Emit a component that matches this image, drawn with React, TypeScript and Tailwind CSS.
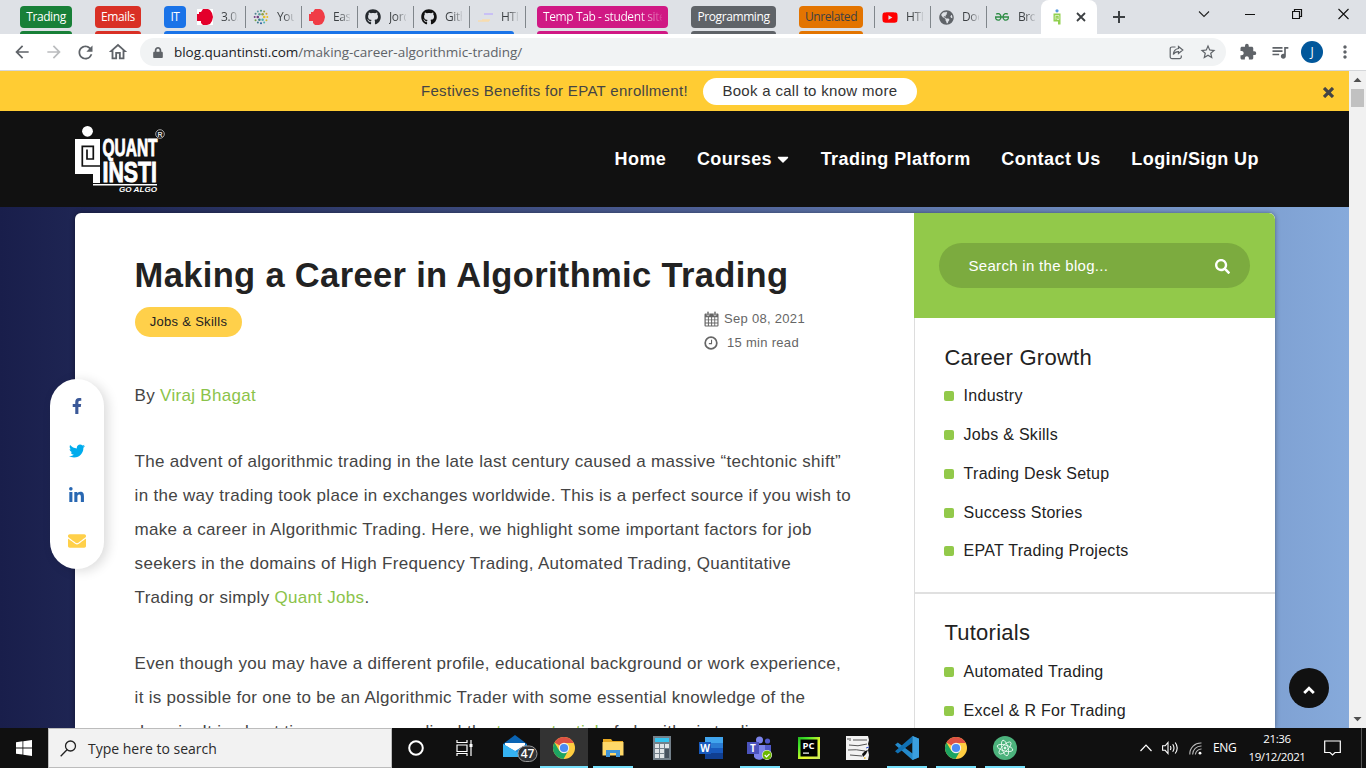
import type { ReactNode } from 'react';
import {
  FaCaretDown,
  FaEnvelope,
  FaFacebookF,
  FaGithub,
  FaGlobeAmericas,
  FaLinkedinIn,
  FaLock,
  FaSearch,
  FaTwitter,
  FaYoutube,
} from 'react-icons/fa';
import { MdExtension, MdQueueMusic, MdMoreVert, MdArrowBack, MdArrowForward, MdRefresh, MdStarBorder, MdOutlineHome } from 'react-icons/md';

/* ---------- Browser tabs ---------- */

function Tab({ icon, title, last }: { icon: ReactNode; title: string; last?: boolean }) {
  return (
    <div className={`flex h-[22px] w-14 shrink-0 items-center border-r pl-[7px] ${last ? 'border-transparent' : 'border-[#80868b]'}`}>
      <span className="flex size-4 shrink-0 items-center justify-center">{icon}</span>
      <span className="ml-2 w-[17px] overflow-hidden bg-linear-to-r from-[#3c4043] from-40% to-[#3c404322] bg-clip-text text-[12px] whitespace-nowrap text-transparent">
        {title}
      </span>
    </div>
  );
}

function Group({ className, children }: { className: string; children: ReactNode }) {
  return (
    <div className={`flex h-[34px] shrink-0 flex-col justify-between pt-1.5 ${className}`}>{children}</div>
  );
}

function QiFavicon() {
  return (
    <svg width="10" height="16" viewBox="0 0 10 16">
      <circle cx="5" cy="1.8" r="1.6" fill="#5a9bdc" />
      <path d="M1.500 4.500h7v11H6v-3H1.500z" fill="#92d050" />
      <path d="M3.200 6.500h3.800v4H5v-2M3.200 6.500v4.200" fill="none" stroke="#fff" strokeWidth=".6" />
    </svg>
  );
}

function RedBlob({ boxed }: { boxed?: boolean }) {
  return (
    <svg width="16" height="16" viewBox="0 0 16 16">
      {boxed && <path fill="#fff" d="M0 0h16v16H0z" />}
      <path fill={boxed ? '#e4002b' : '#f03c46'} d="M6 0h5l2 1 2 3 1 4-1 4-2 3-3 1H6l-2-2v-2H0V5h2V3h2z" />
    </svg>
  );
}

function DotsFavicon() {
  const dots = Array.from({ length: 12 }, (_, i) => (i * Math.PI) / 6);
  const colors = ['#e8c020', '#c8b830', '#50b0b0', '#2c5f9e', '#3c7a8c', '#70a040', '#704080', '#508090', '#60a0a0', '#4a8a70', '#90a040', '#d0a030'];
  return (
    <svg width="16" height="16" viewBox="0 0 16 16">
      {dots.map((a, i) => (
        <g key={i} fill={colors[i]}>
          <circle cx={8 + 6.3 * Math.cos(a)} cy={8 + 6.3 * Math.sin(a)} r="1" />
          {i % 2 === 0 && <circle cx={8 + 3.2 * Math.cos(a)} cy={8 + 3.2 * Math.sin(a)} r="1.300" />}
        </g>
      ))}
    </svg>
  );
}

function TabStrip() {
  return (
    <div className="flex h-[34px] bg-[#dee1e6] pl-5 font-['Open_Sans',sans-serif] text-[12px] tracking-[-0.4px]">
      <Group className="w-[52px]">
        <span className="flex h-[22px] items-center justify-center rounded bg-[#188038] text-white">Trading</span>
        <i className="h-[3px] rounded-t-sm bg-[#188038]" />
      </Group>
      <Group className="ml-[23px] w-[46px]">
        <span className="flex h-[22px] items-center justify-center rounded bg-[#d93025] text-white">Emails</span>
        <i className="h-[3px] rounded-t-sm bg-[#d93025]" />
      </Group>
      <Group className="ml-[23px] w-[362px]">
        <div className="flex">
          <span className="mr-1 flex h-[22px] w-[22px] shrink-0 items-center justify-center rounded bg-[#1a73e8] text-white">IT</span>
          <Tab icon={<RedBlob boxed />} title="3.0.1" />
          <Tab icon={<DotsFavicon />} title="Your" />
          <Tab icon={<RedBlob />} title="Easy" />
          <Tab icon={<FaGithub size={16} color="#24292e" />} title="Jord" />
          <Tab icon={<FaGithub size={16} color="#111" />} title="Gith" />
          <Tab
            icon={
              <svg width="16" height="16" viewBox="0 0 16 16">
                <path d="M7 5h9" stroke="#c9c0f5" strokeWidth="2" />
                <path d="M5 11h8M1 12h11" stroke="#f8dcae" strokeWidth="1.600" />
              </svg>
            }
            title="HTML"
          />
        </div>
        <i className="h-[3px] w-[350px] rounded-t-sm bg-[#1a73e8]" />
      </Group>
      <Group className="ml-[11px] w-[131px]">
        <span className="flex h-[22px] items-center rounded bg-[#d01884] px-1.5">
          <span className="w-[119px] overflow-hidden bg-linear-to-r from-white from-80% to-[#ffffff22] bg-clip-text tracking-[-0.400px] whitespace-nowrap text-transparent">
            Temp Tab - student site
          </span>
        </span>
        <i className="h-[3px] rounded-t-sm bg-[#d01884]" />
      </Group>
      <Group className="ml-[23px] w-[85px]">
        <span className="flex h-[22px] items-center justify-center rounded bg-[#5f6368] text-white">Programming</span>
        <i className="h-[3px] rounded-t-sm bg-[#5f6368]" />
      </Group>
      <Group className="ml-[23px] w-16">
        <span className="flex h-[22px] items-center justify-center rounded bg-[#e37400] tracking-[-0.400px] text-[#3c4043]">Unrelated</span>
        <i className="h-[3px] rounded-t-sm bg-[#e37400]" />
      </Group>
      <div className="mt-1.5 ml-[11px] flex h-[22px] self-start border-l border-[#80868b]">
        <Tab icon={<FaYoutube size={17} color="#f00" />} title="HTML" />
        <Tab icon={<FaGlobeAmericas size={15} color="#5f6368" />} title="Docs" />
        <Tab
          icon={
            <svg width="14" height="8" viewBox="0 0 14 8" fill="none" stroke="#2f8d46" strokeWidth="1.300">
              <path d="M0 4h14M1.200 1.200C3-.1 6 .6 6 4S3 8 .8 6M12.800 1.200C11-.1 8 .6 8 4s3 4 5.200 2M.8 6V4M13.200 6V4" />
            </svg>
          }
          title="Brow"
          last
        />
      </div>
      <div className="-ml-0.5 flex h-[34px] w-14 shrink-0 items-center rounded-t-lg bg-white pl-[11px]">
        <QiFavicon />
        <svg className="ml-[14px]" width="10" height="10" viewBox="0 0 10 10" stroke="#3c4043" strokeWidth="1.800">
          <path d="M1 1l8 8M9 1L1 9" />
        </svg>
      </div>
      <svg className="mt-[11px] ml-4" width="12" height="12" viewBox="0 0 12 12" stroke="#3c4043" strokeWidth="2">
        <path d="M6 0v12M0 6h12" />
      </svg>
      <div className="ml-auto flex items-start pt-2 pr-[17px] text-black">
        <svg width="12" height="12" viewBox="0 0 12 12" fill="none" stroke="#222" strokeWidth="1.100" className="mr-[35px]">
          <path d="M1 3.500l5 5 5-5" />
        </svg>
        <svg width="11" height="12" viewBox="0 0 11 12" className="mr-9" fill="#111">
          <path d="M0 6h10v1H0z" />
        </svg>
        <svg width="11" height="12" viewBox="0 0 11 12" fill="none" stroke="#111" strokeWidth="1.200" className="mr-[35px]">
          <path d="M.5 3.500h7v7h-7zM2.500 3.500v-2h7v7h-2" />
        </svg>
        <svg width="11" height="12" viewBox="0 0 11 12" fill="none" stroke="#111" strokeWidth="1.100">
          <path d="M.5 1l10 10M10.500 1l-10 10" />
        </svg>
      </div>
    </div>
  );
}

function Toolbar() {
  return (
    <div className="flex h-[37px] items-center border-b border-[#d5d7da] bg-white pl-[12px] text-[#5f6368]">
      <MdArrowBack size={20} />
      <MdArrowForward size={20} className="ml-3 text-[#babcbe]" />
      <MdRefresh size={21} className="ml-[11px]" />
      <MdOutlineHome size={22} className="ml-[11px]" />
      <div className="ml-[11px] flex h-7 w-[1086px] items-center rounded-full bg-[#f1f3f4] pl-[13px]">
        <FaLock size={11} className="w-[10px]" />
        <span className="ml-[11px] font-['Open_Sans',sans-serif] text-[13.500px] tracking-[-0.030px] whitespace-nowrap">
          <span className="text-[#202124]">blog.quantinsti.com</span>/making-career-algorithmic-trading/
        </span>
        <svg className="ml-auto" width="15" height="15" viewBox="0 0 15 15" fill="none" stroke="#5f6368" strokeWidth="1.200">
          <path d="M6.500 2H3a1.800 1.800 0 0 0-1.800 1.800v8A1.800 1.800 0 0 0 3 13.600h7.500a1.800 1.800 0 0 0 1.800-1.800v-1.300" />
          <path d="M9.500 1.500L13.800 5l-4.300 3.500V6.600C7 6.500 5.500 7.500 4.300 9.500c.2-3 1.700-5.500 5.200-6z" />
        </svg>
        <MdStarBorder size={18} className="mr-[9px] ml-[15px]" />
      </div>
      <MdExtension size={18} className="ml-[13px]" />
      <MdQueueMusic size={20} className="ml-[13px]" />
      <span className="ml-[11px] flex size-[22px] items-center justify-center rounded-full bg-[#01579b] font-['Open_Sans',sans-serif] text-[12px] text-white">J</span>
      <MdMoreVert size={20} className="ml-3" />
    </div>
  );
}

/* ---------- Page ---------- */

function Banner() {
  return (
    <div className="flex h-10 shrink-0 items-center bg-[#ffcc33] pl-[421px] text-[15px] tracking-[.31px] text-[#444]">
      <span className="whitespace-nowrap">Festives Benefits for EPAT enrollment!</span>
      <span className="ml-[15px] flex h-[27px] w-[214px] items-center justify-center rounded-full bg-white text-[#333]">Book a call to know more</span>
      <svg className="mt-0.5 mr-[15px] ml-auto" width="11" height="11" viewBox="0 0 11 11" stroke="#444" strokeWidth="3.200">
        <path d="M1 1l9 9M10 1l-9 9" />
      </svg>
    </div>
  );
}

function Logo() {
  return (
    <svg width="92" height="70" viewBox="0 0 92 70" fill="#fff" className="mt-0.5">
      <circle cx="12.500" cy="6.300" r="5.400" />
      <path d="M0 14h25v44h-7V49H0z" />
      <path d="M12 24.500v9.500h6.300V21.300H7.300v19.700H25" fill="none" stroke="#111" strokeWidth="1.700" />
      <g fontFamily="'Liberation Sans',sans-serif" fontWeight="700">
        <text x="27.500" y="31" fontSize="24" textLength="55" lengthAdjust="spacingAndGlyphs" stroke="#fff" strokeWidth=".9">QUANT</text>
        <text x="27.500" y="57" fontSize="30" textLength="54.500" lengthAdjust="spacingAndGlyphs" stroke="#fff" strokeWidth="1">INSTI</text>
        <text x="44" y="67" fontStyle="italic" fontSize="7" textLength="38" lengthAdjust="spacingAndGlyphs">GO ALGO</text>
      </g>
      <path d="M18 59h64v1.500H18z" />
      <circle cx="85" cy="9" r="4.300" fill="none" stroke="#ccc" strokeWidth=".8" />
      <text x="82.600" y="11.600" fontFamily="'Liberation Sans',sans-serif" fontSize="7" fontWeight="700" fill="#ddd">R</text>
    </svg>
  );
}

function Header() {
  return (
    <header className="flex h-24 shrink-0 items-center bg-[#111] pr-[90px] pl-[75px]">
      <Logo />
      <nav className="ml-auto flex items-center gap-[30.600px] text-[18px] font-bold tracking-[.44px] whitespace-nowrap text-white">
        <a>Home</a>
        <a className="flex items-center">
          Courses
          <FaCaretDown size={18} className="mx-0.5 -mr-0.5" />
        </a>
        <a>Trading Platform</a>
        <a>Contact Us</a>
        <a>Login/Sign Up</a>
      </nav>
    </header>
  );
}

function CalendarIcon() {
  return (
    <svg width="15" height="16" viewBox="0 0 15 16" fill="#666">
      <path d="M1.500 2.500h12a1 1 0 0 1 1 1v11a1 1 0 0 1-1 1h-12a1 1 0 0 1-1-1v-11a1 1 0 0 1 1-1z" />
      <path fill="#fff" d="M1.700 6.200h2.200v2.200H1.700zM4.900 6.200h2.200v2.200H4.900zM8.100 6.200h2.200v2.200H8.100zM11.200 6.200h2.200v2.200h-2.200zM1.700 9.300h2.200v2.200H1.700zM4.900 9.300h2.200v2.200H4.900zM8.100 9.300h2.200v2.200H8.100zM11.200 9.300h2.200v2.200h-2.200zM1.700 12.400h2.200v2H1.700zM4.900 12.400h2.200v2H4.900zM8.100 12.400h2.200v2H8.100zM11.200 12.400h2.200v2h-2.200z" />
      <path stroke="#fff" strokeWidth=".5" d="M3 .6h2v4H3zM10 .6h2v4h-2z" />
    </svg>
  );
}

function Article() {
  return (
    <article className="w-[839px] shrink-0 pt-[39px] pl-[59.600px] text-[17px] leading-[34px] tracking-[.3px] whitespace-nowrap text-[#444]">
      <h1 className="text-[34.500px] leading-[46px] font-bold tracking-[.34px] text-[#222]">Making a Career in Algorithmic Trading</h1>
      <div className="mt-[9px] flex h-[60px] items-start pl-[.4px] text-[13px] leading-6">
        <span className="flex h-[30px] w-[107px] items-center justify-center rounded-full bg-[#ffd04a] text-[#222]">Jobs &amp; Skills</span>
        <div className="ml-[462px] text-[#666]">
          <div className="flex h-6 items-center">
            <CalendarIcon />
            <span className="ml-[5px]">Sep 08, 2021</span>
          </div>
          <div className="flex h-6 items-center">
            <svg width="14" height="14" viewBox="0 0 13 13" fill="none" stroke="#666">
              <circle cx="6.500" cy="6.500" r="5.400" strokeWidth="1.600" />
              <path d="M7 3.500v3.600H4.500" strokeWidth="1" />
            </svg>
            <span className="ml-[9px]">15 min read</span>
          </div>
        </div>
      </div>
      <p className="mt-[12px]">
        By <a className="text-[#8bc34a]">Viraj Bhagat</a>
      </p>
      <p className="mt-8">
        The advent of algorithmic trading in the late last century caused a massive “techtonic shift”
        <br />
        in the way trading took place in exchanges worldwide. This is a perfect source if you wish to
        <br />
        make a career in Algorithmic Trading. Here, we highlight some important factors for job
        <br />
        seekers in the domains of High Frequency Trading, Automated Trading, Quantitative
        <br />
        Trading or simply <a className="text-[#8bc34a]">Quant Jobs</a>.
      </p>
      <p className="mt-8">
        Even though you may have a different profile, educational background or work experience,
        <br />
        it is possible for one to be an Algorithmic Trader with some essential knowledge of the
        <br />
        domain. It is about time everyone realised the <a className="text-[#8bc34a]">true potential</a> of algorithmic trading.
      </p>
    </article>
  );
}

function LinkSection({ title, links }: { title: string; links: string[] }) {
  return (
    <section className="h-[275.600px] shrink-0 border-b-2 border-[#e0e0e0] pt-[26.800px] pl-[29.400px]">
      <h3 className="mb-[6.300px] text-[22px] leading-[26px] tracking-[.25px] text-[#222]">{title}</h3>
      {links.map((l) => (
        <div key={l} className="flex h-[38.750px] items-center text-[16px] tracking-[.28px] text-[#222]">
          <i className="mr-[9.200px] size-2.5 rounded-xs bg-[#92c94a]" />
          {l}
        </div>
      ))}
    </section>
  );
}

function Sidebar() {
  return (
    <aside className="flex w-[361px] flex-col">
      <div className="h-[105px] shrink-0 rounded-tr-md bg-[#92c94a] px-[25px] pt-[30px]">
        <div className="flex h-[45px] items-center rounded-full bg-[#7cab3f] pr-5 pl-[29.500px] text-[15px] tracking-[.3px] text-white">
          <span className="mt-0.5">Search in the blog...</span>
          <FaSearch size={15} className="mt-0.5 ml-auto" />
        </div>
      </div>
      <div className="border-l border-[#ddd]">
        <LinkSection title="Career Growth" links={['Industry', 'Jobs & Skills', 'Trading Desk Setup', 'Success Stories', 'EPAT Trading Projects']} />
        <LinkSection title="Tutorials" links={['Automated Trading', 'Excel & R For Trading']} />
      </div>
    </aside>
  );
}

function SocialBar() {
  return (
    <div className="absolute top-[308px] left-[50px] flex h-[190px] w-[54px] flex-col items-center rounded-[27px] bg-white pt-1 pr-px shadow-[4px_2px_12px_rgba(0,0,0,.14)]">
      <span className="flex h-[45px] items-center"><FaFacebookF size={16} color="#3b5998" /></span>
      <span className="flex h-[45px] items-center"><FaTwitter size={16} color="#00aced" /></span>
      <span className="flex h-[45px] items-center"><FaLinkedinIn size={17} color="#2867b2" /></span>
      <span className="flex h-[45px] items-center pt-px"><FaEnvelope size={18} color="#ffd04a" /></span>
    </div>
  );
}

function Scrollbar() {
  return (
    <div className="flex w-[17px] shrink-0 flex-col items-center bg-[#f1f1f1]">
      <svg width="17" height="17" viewBox="0 0 17 17" fill="#505050"><path d="M4.500 11h8l-4-4.200z" /></svg>
      <i className="mt-px h-[18px] w-[13px] bg-[#c1c1c1]" />
      <svg className="mt-auto" width="17" height="17" viewBox="0 0 17 17" fill="#505050"><path d="M4.500 6h8l-4 4.200z" /></svg>
    </div>
  );
}

/* ---------- Taskbar ---------- */

function Chrome() {
  return (
    <svg width="22" height="22" viewBox="0 0 22 22">
      <circle cx="11" cy="11" r="11" fill="#ffcd40" />
      <path d="M1.470 5.500A11 11 0 0 1 20.530 5.500L20.700 6H11v5z" fill="#dd5144" />
      <path d="M1.470 5.500A11 11 0 0 0 10.500 22L15.300 13.500 11 16l-4.700-2.300z" fill="#1da462" />
      <circle cx="11" cy="11" r="5.200" fill="#f1f1f1" />
      <circle cx="11" cy="11" r="4.100" fill="#4c8bf5" />
    </svg>
  );
}

function Slot({ children, active, running }: { children: ReactNode; active?: boolean; running?: boolean }) {
  return (
    <div className={`flex h-10 w-[49px] shrink-0 flex-col items-center ${active ? 'bg-[#333] bg-clip-content pl-px' : ''}`}>
      <div className="flex h-[38px] items-center pt-0.5">{children}</div>
      <i className={`h-0.5 ${active ? 'w-full bg-[#76e0fb]' : running ? 'w-10 bg-[#76e0fb]' : 'w-0'}`} />
    </div>
  );
}

function Taskbar() {
  return (
    <div className="flex h-10 bg-[#101010] font-['Open_Sans',sans-serif] text-white">
      <div className="flex w-12 items-center justify-center">
        <svg width="16" height="16" viewBox="0 0 16 16" fill="#fff">
          <path d="M0 2.200L6.500 1.300v6.200H0zM7.300 1.200L16 0v7.500H7.300zM0 8.400h6.500v6.200L0 13.700zM7.300 8.400H16V16l-8.700-1.200z" />
        </svg>
      </div>
      <div className="flex w-[344px] items-center border border-[#bcbcbc] bg-[#f2f2f2] pl-[11px] text-[14px] text-[#2b2b2b]">
        <svg width="17" height="17" viewBox="0 0 17 17" fill="none" stroke="#222" strokeWidth="1.300">
          <circle cx="10.500" cy="6" r="5" />
          <path d="M7 9.700L.7 16.200" />
        </svg>
        <span className="ml-[11px]">Type here to search</span>
      </div>
      <Slot>
        <svg width="16" height="16" viewBox="0 0 16 16" className="mr-px"><circle cx="8" cy="8" r="6.800" fill="none" stroke="#fff" strokeWidth="2" /></svg>
      </Slot>
      <Slot>
        <svg width="17" height="16" viewBox="0 0 17 16" fill="none" stroke="#fff" strokeWidth="1.200" className="mr-0.5">
          <path d="M1 0v2.500h10V0M1 5h10v6.500H1zM1 16v-2.500h10V16M15 0v16" />
          <path d="M13.500 4h3v3h-3z" fill="#fff" stroke="none" />
        </svg>
      </Slot>
      <Slot>
        <svg width="36" height="28" viewBox="0 0 36 28" className="ml-2.5 shrink-0">
          <path d="M1 10L13 1l12 9v3H1z" fill="#0a64b4" />
          <path d="M3 9h20v9H3z" fill="#fff" />
          <path d="M1 10l12 7 12-7v13H1z" fill="#1c8fe0" />
          <path d="M1 10l12 7L1 23zM1 23l12-6 12 6z" fill="#35b3f3" />
          <rect x="16" y="12" width="19" height="15.500" rx="7.700" fill="#303236" stroke="#999" />
          <text x="25.500" y="24" textAnchor="middle" fill="#fff" fontSize="12" fontWeight="600" fontFamily="'Open Sans',sans-serif">47</text>
        </svg>
      </Slot>
      <Slot active><Chrome /></Slot>
      <Slot running>
        <svg width="22" height="20" viewBox="0 0 22 20">
          <path d="M1 1h8l1.500 2H21v5H1z" fill="#e8a820" />
          <path d="M.5 4h21v13.500H.5z" fill="#ffd869" />
          <path d="M4 19v-7h14v7h-4v-4H8v4z" fill="#3e94d8" />
        </svg>
      </Slot>
      <Slot>
        <svg width="18" height="24" viewBox="0 0 18 24">
          <path d="M0 0h18v24H0z" fill="#73808a" />
          <path d="M2 2h14v4H2z" fill="#35c4f0" />
          <path d="M2 8h4v4H2zM7 8h4v4H7zM12 8h4v4h-4zM2 13h4v4H2zM7 13h4v4H7zM2 18h4v4H2zM7 18h4v4H7z" fill="#e1e5e8" />
          <path d="M12 13h4v9h-4z" fill="#46525e" />
        </svg>
      </Slot>
      <Slot>
        <svg width="24" height="22" viewBox="0 0 24 22">
          <path d="M6 0h18v6H6z" fill="#41a5ee" />
          <path d="M6 6h18v5H6z" fill="#2b7cd3" />
          <path d="M6 11h18v5H6z" fill="#185abd" />
          <path d="M6 16h18v6H6z" fill="#103f91" />
          <path d="M0 5h12v12H0z" fill="#185abd" />
          <text x="6" y="14.500" textAnchor="middle" fill="#fff" fontSize="10" fontWeight="700" fontFamily="'Open Sans',sans-serif">W</text>
        </svg>
      </Slot>
      <Slot running>
        <svg width="25" height="24" viewBox="0 0 25 24">
          <circle cx="12.500" cy="4" r="3.500" fill="#7b83eb" />
          <circle cx="20.500" cy="5" r="2.600" fill="#5059c9" />
          <path d="M16 9h8v6a5 5 0 0 1-8 4z" fill="#5059c9" />
          <path d="M7 9h11v8a6 6 0 0 1-11 4z" fill="#7b83eb" />
          <path d="M0 6h12v12H0z" fill="#4b53bc" />
          <text x="6" y="15.500" textAnchor="middle" fill="#fff" fontSize="10" fontWeight="700" fontFamily="'Open Sans',sans-serif">T</text>
          <circle cx="20" cy="19" r="5" fill="#fff" />
          <circle cx="20" cy="19" r="4.500" fill="#6bb700" />
          <path d="M17.700 19l1.800 1.800 3-3" fill="none" stroke="#fff" strokeWidth="1.200" />
        </svg>
      </Slot>
      <Slot>
        <svg width="22" height="22" viewBox="0 0 22 22">
          <defs>
            <linearGradient id="pc" x1="0" y1="0" x2="1" y2="1">
              <stop offset="0" stopColor="#21b720" />
              <stop offset=".25" stopColor="#4bea2a" />
              <stop offset=".6" stopColor="#ecf82a" />
              <stop offset="1" stopColor="#c8e860" />
            </linearGradient>
          </defs>
          <path d="M0 0h22v22H0z" fill="url(#pc)" />
          <path d="M2.500 2.500h17v17h-17z" fill="#000" />
          <text x="4.500" y="11.500" fill="#fff" fontSize="9" fontWeight="700" textLength="12" lengthAdjust="spacingAndGlyphs" fontFamily="'Open Sans',sans-serif">PC</text>
          <path d="M5 15.500h6v1.200H5z" fill="#fff" />
        </svg>
      </Slot>
      <Slot>
        <svg width="24" height="24" viewBox="0 0 24 24">
          <path d="M0 0h24v24H0z" fill="#f2f2f2" />
          <path d="M1 3h2M4 2v3M7 4h14M3 9q9 2 18-1M2 14q8-1 17 1M4 19l12 1" stroke="#555" fill="none" strokeWidth="1" />
          <path d="M24 0h-2l1 4-1 4 1 3-1 3 1 5-1 5H24zM16 18l3-3 3-1-2 4-3 3z" fill="#111" />
          <path d="M20 12l3-1" stroke="#3150c8" />
          <path d="M18 22h1.500" stroke="#eebb22" strokeWidth="1.500" />
        </svg>
      </Slot>
      <Slot running>
        <svg width="24" height="24" viewBox="0 0 24 24">
          <path d="M17.500 0L24 2.800v18.400L17.500 24 0 8.700 2.800 6.500 17.500 17.500z" fill="#2489ca" />
          <path d="M17.500 24L0 15.300l2.800 2.200L17.500 6.500V0L0 15.300z" fill="#1070b3" />
          <path d="M17.500 0L24 2.800v18.400L17.500 24z" fill="#3a9fe0" />
        </svg>
      </Slot>
      <Slot running><Chrome /></Slot>
      <Slot running>
        <svg width="24" height="24" viewBox="0 0 24 24" fill="none" stroke="#e8f8ee" strokeWidth=".9">
          <circle cx="12" cy="12" r="12" fill="#4cb27c" stroke="none" />
          <ellipse cx="12" cy="12" rx="8" ry="3" transform="rotate(15 12 12)" />
          <ellipse cx="12" cy="12" rx="8" ry="3" transform="rotate(75 12 12)" />
          <ellipse cx="12" cy="12" rx="8" ry="3" transform="rotate(135 12 12)" />
          <circle cx="12" cy="12" r="1" fill="#fff" />
        </svg>
      </Slot>
      <div className="ml-auto flex items-center text-[12px] tracking-[-0.4px]">
        <svg width="12" height="8" viewBox="0 0 12 8" fill="none" stroke="#fff" strokeWidth="1.200"><path d="M.5 7L6 1.200 11.500 7" /></svg>
        <svg width="17" height="14" viewBox="0 0 17 14" fill="none" stroke="#fff" strokeWidth="1.100" className="ml-2.5">
          <path d="M.6 4.800h2.600L6 1.500v11L3.200 9.300H.6zM8.300 5q1.200 2 0 4M10.700 3.200q2.600 3.800 0 7.600M13.200 1.500q4 5.500 0 11" />
        </svg>
        <svg width="13" height="13" viewBox="0 0 13 13" fill="none" stroke="#bbb" strokeWidth="1.100" className="ml-2.5">
          <path d="M.8 12.500A11 11 0 0 1 12.500 1M3.600 12.500A8.500 8.500 0 0 1 12.500 4M6.400 12.500A6 6 0 0 1 12.500 7" />
          <circle cx="11" cy="11.200" r="1.400" fill="#fff" stroke="none" />
        </svg>
        <span className="ml-[11px] w-6">ENG</span>
        <span className="ml-[10px] w-[60px] text-center text-[11.500px] leading-[18px] whitespace-nowrap">
          21:36
          <br />
          19/12/2021
        </span>
        <svg width="17" height="17" viewBox="0 0 17 17" fill="none" stroke="#fff" strokeWidth="1.200" className="ml-[17px]">
          <path d="M.7 1h15.600v11.500H11L8.500 15 6 12.500H.7z" />
        </svg>
        <i className="mr-1 ml-5 h-10 w-px bg-[#555]" />
      </div>
    </div>
  );
}

export default function App() {
  return (
    <div className="flex h-[768px] w-[1366px] flex-col overflow-hidden font-['Liberation_Sans',Arial,sans-serif]">
      <TabStrip />
      <Toolbar />
      <div className="relative flex h-[657px] overflow-hidden">
        <div className="flex w-[1349px] flex-col bg-linear-to-r from-[#191e4b] via-[#4d5f95] to-[#86aadb]">
          <Banner />
          <Header />
          <main className="mt-1.5 ml-[75px] flex min-h-0 w-[1200px] flex-1 overflow-hidden rounded-t-md bg-white shadow-[0_0_5px_rgba(0,0,0,.4)]">
            <Article />
            <Sidebar />
          </main>
        </div>
        <Scrollbar />
        <SocialBar />
        <button className="absolute top-[597px] left-[1289px] flex size-10 items-center justify-center rounded-full bg-[#111]">
          <svg width="12" height="8" viewBox="0 0 12 8" fill="none" stroke="#fff" strokeWidth="2.800" className="mt-1">
            <path d="M1.200 7L6 2.200 10.800 7" />
          </svg>
        </button>
      </div>
      <Taskbar />
    </div>
  );
}
